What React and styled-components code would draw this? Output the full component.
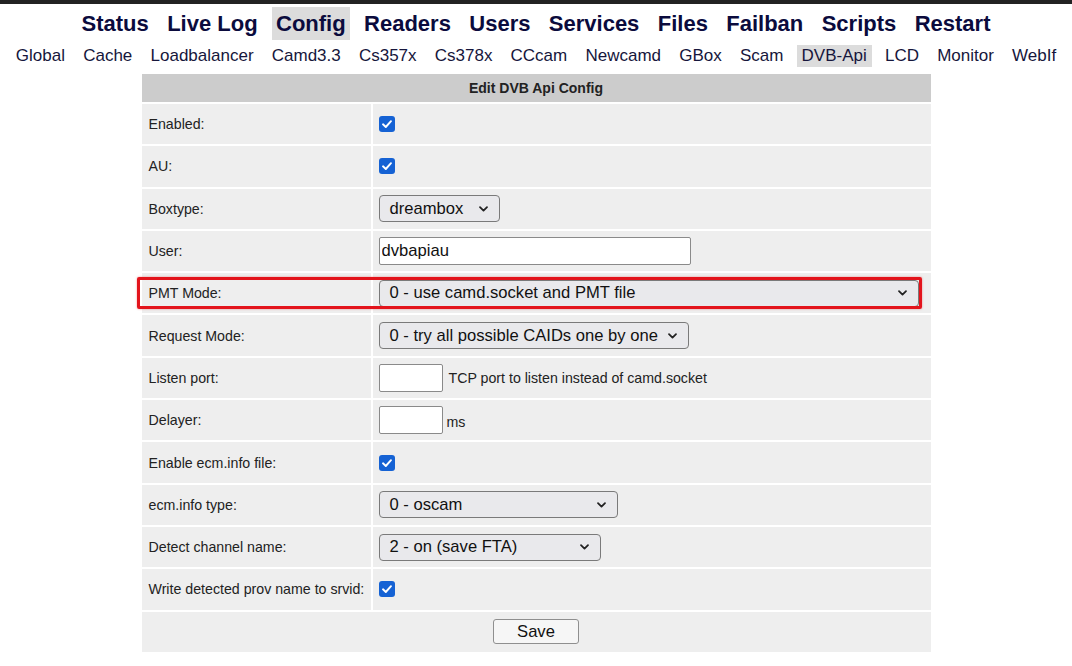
import React from 'react';
import styled, { createGlobalStyle } from 'styled-components';

const GlobalStyle = createGlobalStyle`
  body {
    margin: 0;
    background: #ffffff;
    font-family: "Liberation Sans", Arial, sans-serif;
  }
`;

const mainMenu = ['Status', 'Live Log', 'Config', 'Readers', 'Users', 'Services', 'Files', 'Failban', 'Scripts', 'Restart'];
const subMenu = ['Global', 'Cache', 'Loadbalancer', 'Camd3.3', 'Cs357x', 'Cs378x', 'CCcam', 'Newcamd', 'GBox', 'Scam', 'DVB-Api', 'LCD', 'Monitor', 'WebIf'];

const Chevron = () => (
  <svg width="11" height="8" viewBox="0 0 11 8" fill="none">
    <path d="M2 2.2 L5.5 5.6 L9 2.2" stroke="#222" strokeWidth="1.8" strokeLinecap="round" strokeLinejoin="round" />
  </svg>
);

const Checkbox = () => (
  <CheckBox role="checkbox" aria-checked="true">
    <svg width="16" height="16" viewBox="0 0 16 16" fill="none">
      <path d="M4 8.3 L6.8 11 L12 5.2" stroke="#fff" strokeWidth="1.9" strokeLinecap="round" strokeLinejoin="round" />
    </svg>
  </CheckBox>
);

const Select = ({ value, width }) => (
  <SelectBox $width={width}>
    <span>{value}</span>
    <Chevron />
  </SelectBox>
);

const App = () => {
  return (
    <>
      <GlobalStyle />
      <TopBar />
      <MainNav>
        {mainMenu.map((item) => (
          <MainLink key={item} $active={item === 'Config'}>{item}</MainLink>
        ))}
      </MainNav>
      <SubNav>
        {subMenu.map((item) => (
          <SubLink key={item} $active={item === 'DVB-Api'}>{item}</SubLink>
        ))}
      </SubNav>
      <Form>
        <Header>Edit DVB Api Config</Header>
        <Row>
          <Label>Enabled:</Label>
          <Value><Checkbox /></Value>
        </Row>
        <Row>
          <Label>AU:</Label>
          <Value><Checkbox /></Value>
        </Row>
        <Row>
          <Label>Boxtype:</Label>
          <Value><Select value="dreambox" width={121} /></Value>
        </Row>
        <Row>
          <Label>User:</Label>
          <Value><TextInput $width={312} defaultValue="dvbapiau" /></Value>
        </Row>
        <Row>
          <Label>PMT Mode:</Label>
          <Value><Select value="0 - use camd.socket and PMT file" width={540} /></Value>
          <Highlight />
        </Row>
        <Row>
          <Label>Request Mode:</Label>
          <Value><Select value="0 - try all possible CAIDs one by one" width={310} /></Value>
        </Row>
        <Row>
          <Label>Listen port:</Label>
          <Value $inline>
            <TextInput $width={64} />
            <Note>TCP port to listen instead of camd.socket</Note>
          </Value>
        </Row>
        <Row>
          <Label>Delayer:</Label>
          <Value $inline>
            <TextInput $width={64} />
            <Note $low>ms</Note>
          </Value>
        </Row>
        <Row>
          <Label>Enable ecm.info file:</Label>
          <Value><Checkbox /></Value>
        </Row>
        <Row>
          <Label>ecm.info type:</Label>
          <Value><Select value="0 - oscam" width={239} /></Value>
        </Row>
        <Row>
          <Label>Detect channel name:</Label>
          <Value><Select value="2 - on (save FTA)" width={222} /></Value>
        </Row>
        <Row>
          <Label>Write detected prov name to srvid:</Label>
          <Value><Checkbox /></Value>
        </Row>
        <SaveRow>
          <SaveButton type="button">Save</SaveButton>
        </SaveRow>
      </Form>
    </>
  );
};

const TopBar = styled.div`
  height: 4px;
  background: #222222;
`;

const MainNav = styled.nav`
  display: flex;
  justify-content: center;
  gap: 10.4px;
  margin-top: 3px;
`;

const MainLink = styled.a`
  height: 33px;
  line-height: 33px;
  padding: 0 4px;
  font-size: 22px;
  font-weight: bold;
  color: #0b0b3d;
  background: ${(p) => (p.$active ? '#dcdcdc' : 'transparent')};
`;

const SubNav = styled.nav`
  display: flex;
  justify-content: center;
  gap: 8.2px;
  margin-top: 5px;
`;

const SubLink = styled.a`
  height: 22px;
  line-height: 22px;
  padding: 0 5px;
  font-size: 17px;
  color: #16163c;
  background: ${(p) => (p.$active ? '#dcdcdc' : 'transparent')};
`;

const Form = styled.div`
  width: 789px;
  margin: 7px auto 0;
  display: flex;
  flex-direction: column;
  gap: 2px;
`;

const Header = styled.div`
  height: 28px;
  line-height: 28px;
  background: #cccccc;
  text-align: center;
  font-size: 14px;
  font-weight: bold;
  color: #222;
`;

const Row = styled.div`
  position: relative;
  display: grid;
  grid-template-columns: 229px 1fr;
  column-gap: 2px;
  height: 40.3px;
`;

const Label = styled.div`
  display: flex;
  align-items: center;
  padding-left: 7px;
  background: #eeeeee;
  font-size: 14.2px;
  color: #222;
`;

const Value = styled.div`
  display: flex;
  align-items: ${(p) => (p.$inline ? 'baseline' : 'center')};
  padding: ${(p) => (p.$inline ? '6px 6px 0' : '0 6px')};
  background: #eeeeee;
`;

const CheckBox = styled.span`
  display: flex;
  width: 16px;
  height: 16px;
  border-radius: 3px;
  background: #1562d4;
`;

const SelectBox = styled.div`
  box-sizing: border-box;
  display: flex;
  align-items: center;
  justify-content: space-between;
  width: ${(p) => p.$width}px;
  height: 27px;
  padding: 0 10px 0 10px;
  border: 1px solid #7a7a7a;
  border-radius: 4px;
  background: #e9e9ec;
  font-size: 16.6px;
  color: #111;
`;

const TextInput = styled.input`
  box-sizing: border-box;
  width: ${(p) => p.$width}px;
  height: 28px;
  padding: 0 2px;
  border: 1px solid #8a8a8a;
  border-radius: 2px;
  background: #ffffff;
  font-family: "Liberation Sans", Arial, sans-serif;
  font-size: 16.6px;
  color: #111;
  outline: none;
`;

const Note = styled.span`
  margin-left: ${(p) => (p.$low ? '4px' : '6px')};
  font-size: 14.2px;
  color: #222;
  position: relative;
  top: ${(p) => (p.$low ? '2px' : '0')};
`;

const Highlight = styled.span`
  position: absolute;
  left: -5px;
  right: 9px;
  top: 4px;
  bottom: 4px;
  border: 3.5px solid #e3141c;
  border-radius: 2px;
  box-shadow: 0 0 2px rgba(227, 20, 28, 0.5);
  pointer-events: none;
`;

const SaveRow = styled.div`
  display: flex;
  align-items: center;
  justify-content: center;
  height: 40px;
  background: #eeeeee;
`;

const SaveButton = styled.button`
  width: 86px;
  height: 25px;
  border: 1px solid #8f8f8f;
  border-radius: 3px;
  background: #f6f6f6;
  font-family: "Liberation Sans", Arial, sans-serif;
  font-size: 16.6px;
  color: #111;
`;

export default App;
